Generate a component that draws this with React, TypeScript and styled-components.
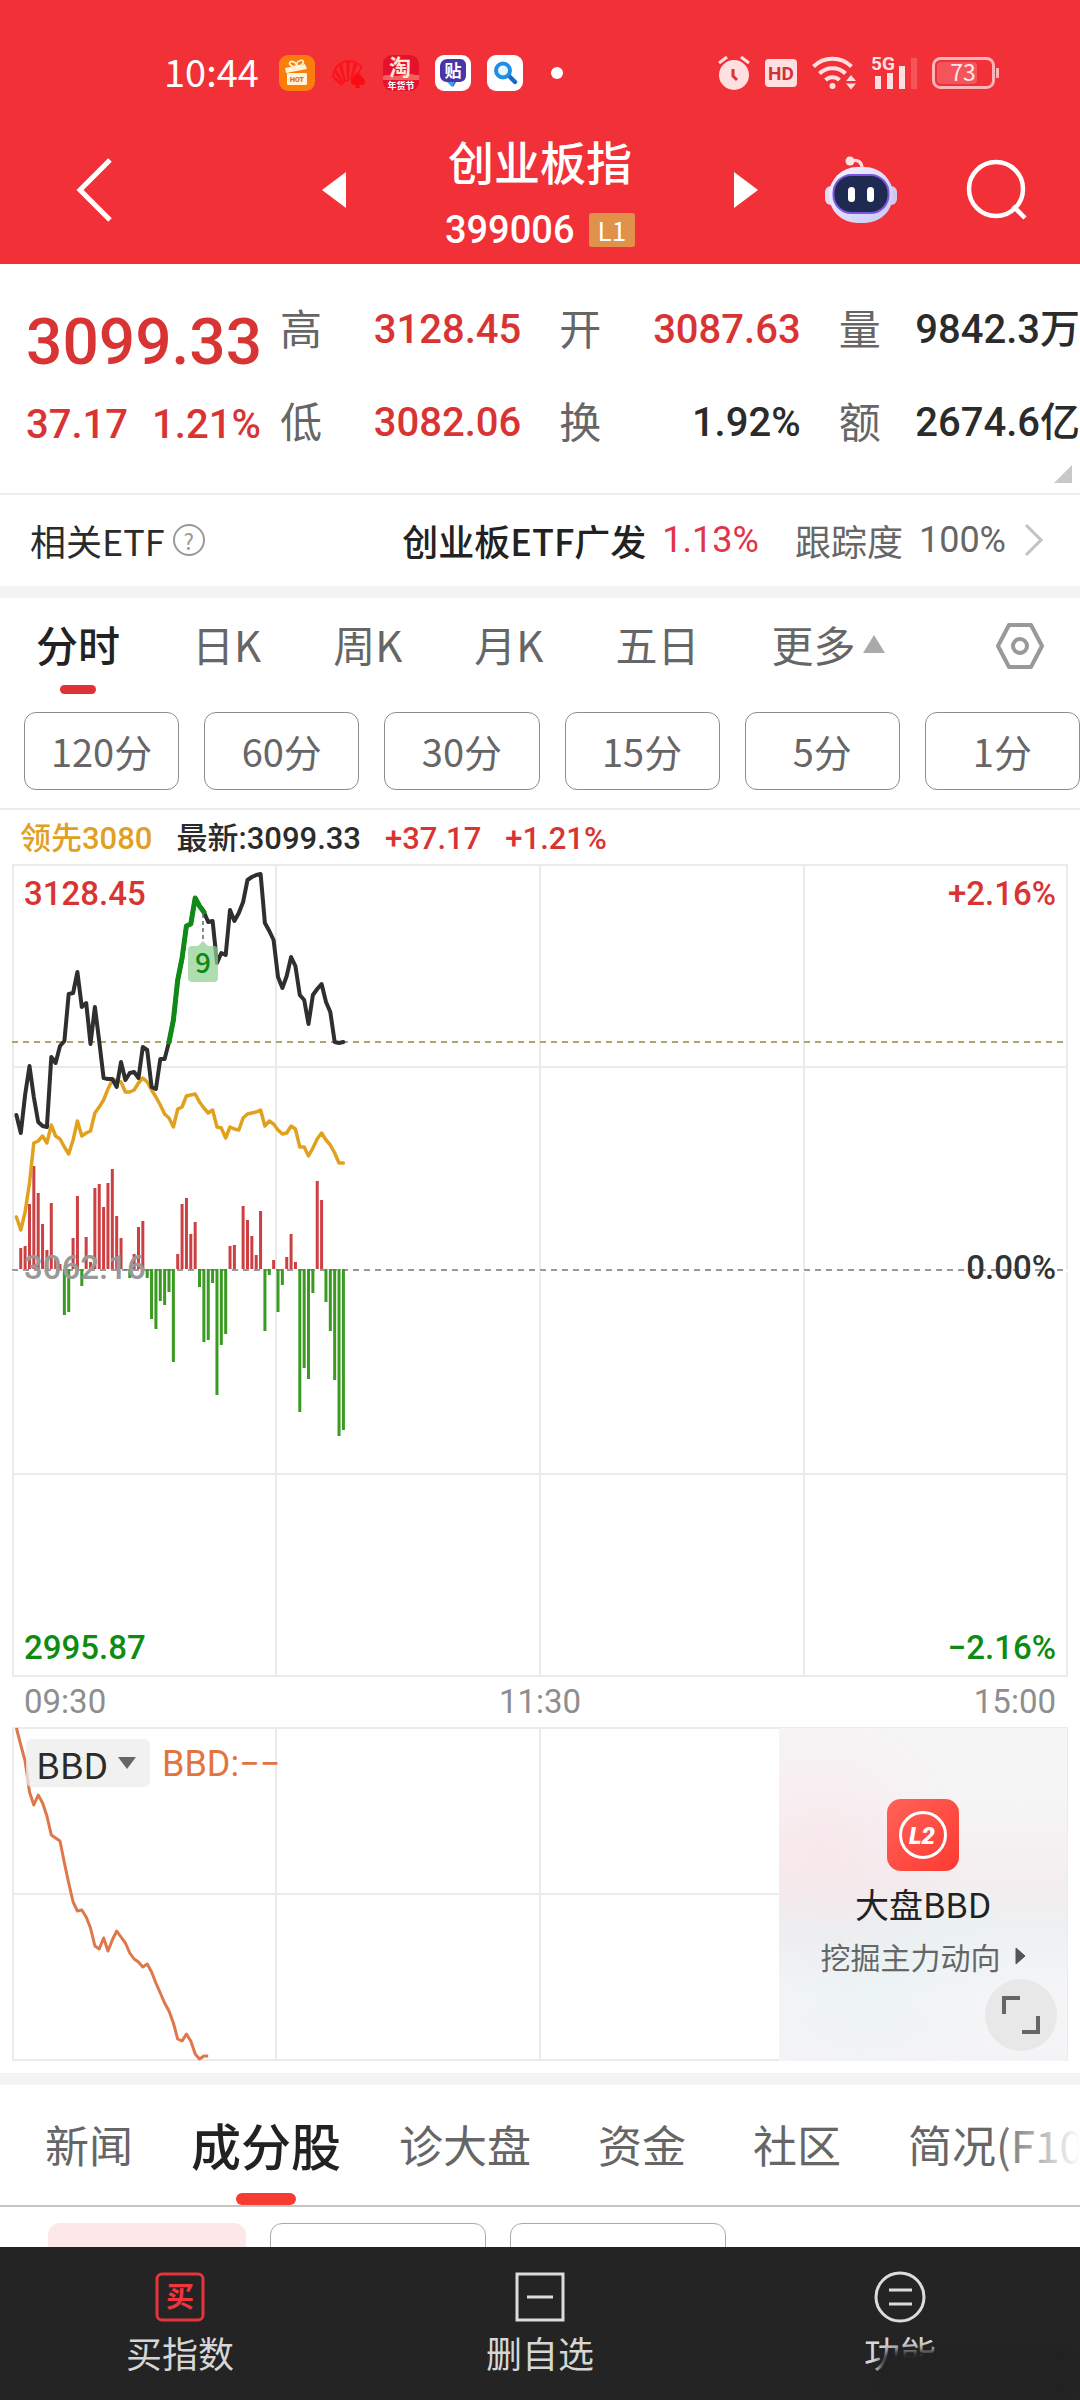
import React from "react";
import styled, { createGlobalStyle, css } from "styled-components";

const CJK = `"Noto Sans CJK SC", sans-serif`;
const NUM = `Roboto, "Noto Sans CJK SC", sans-serif`;
const RED = "#d93434";
const GREEN = "#0e8c12";

const GlobalStyle = createGlobalStyle`
  * { box-sizing: border-box; }
  body { margin: 0; background: #fff; color: #2b2b2b; font-family: ${CJK}; }
  button, select { font: inherit; color: inherit; background: none; border: 0; padding: 0; margin: 0; }
  h1, p, dl, dd, dt { margin: 0; font-weight: 400; }
  svg { display: block; flex: none; overflow: visible; }
`;

/* ---------- data ---------- */

const PRICE = [
  251, 269, 231, 202, 233, 258, 262, 263, 193, 199, 182, 177, 130, 129, 108, 143, 139, 180, 143, 177,
  214, 215, 215, 223, 198, 216, 209, 208, 214, 183, 186, 223, 225, 195, 195, 178, 156, 116, 94, 62,
  60, 34, 42, 48, 58, 57, 99, 89, 91, 46, 57, 49, 38, 16, 13, 11, 10, 59, 67, 76, 113, 124, 112, 93,
  102, 131, 136, 160, 131, 125, 120, 138, 148, 178, 179, 178,
];
const LEADING = [
  353, 366, 348, 319, 279, 277, 272, 279, 261, 272, 275, 283, 290, 276, 257, 272, 269, 267, 249, 243,
  236, 225, 216, 216, 218, 228, 228, 226, 219, 214, 218, 226, 233, 241, 250, 254, 263, 245, 243, 232,
  231, 230, 238, 244, 249, 246, 263, 264, 274, 263, 265, 266, 254, 250, 249, 248, 246, 262, 257, 260,
  266, 270, 269, 262, 265, 283, 283, 292, 284, 275, 269, 276, 281, 289, 299, 299,
];
const FLOW = [
  0, 21, 23, 65, 103, 76, 45, 19, 66, 10, 5, -46, -43, 31, 73, -17, 32, 7, 81, 85, 62, 86, 100, 53, 31,
  -1, -9, 15, 42, 48, -9, -50, -60, -32, -36, -23, -93, 15, 65, 71, 35, 47, -18, -73, -71, -14, -126,
  -76, -65, 23, 24, 0, 63, 49, 33, 14, 58, -62, -6, 9, -43, -16, 12, 35, 7, -143, -99, -110, -24, 88,
  69, -33, -62, -111, -167, -161,
];
const BBD = [
  1, 18, 34, 65, 78, 68, 76, 89, 108, 111, 114, 136, 156, 175, 184, 183, 190, 201, 219, 222, 211, 224,
  213, 204, 210, 216, 226, 232, 235, 240, 237, 245, 256, 266, 276, 284, 296, 312, 314, 307, 314, 327,
  332, 329, 329,
];

const xAt = (i: number) => 4.4 + i * 4.36;
const line = (ys: number[], from = 0) =>
  ys.map((y, i) => `${xAt(i + from).toFixed(1)},${y}`).join(" ");

const QUOTES = [
  { label: "高", value: "3128.45", up: true },
  { label: "开", value: "3087.63", up: true },
  { label: "量", value: "9842.3万" },
  { label: "低", value: "3082.06", up: true },
  { label: "换", value: "1.92%" },
  { label: "额", value: "2674.6亿" },
];

/* ---------- layout ---------- */

const Page = styled.div`
  display: flex;
  flex-direction: column;
  height: 100vh;
  overflow: hidden;
`;

const Content = styled.main`
  flex: 1;
  min-height: 0;
  overflow: hidden;
`;

const Header = styled.header`
  background: #f23037;
  color: #fff;
  flex: none;
`;

const StatusBar = styled.div`
  display: flex;
  align-items: center;
  justify-content: space-between;
  height: 110px;
  padding: 36px 80px 0 164px;
`;

const StatusGroup = styled.div<{ $gap: number }>`
  display: flex;
  align-items: center;
  gap: ${(p) => p.$gap}px;
`;

const Clock = styled.time`
  margin-right: 4px;
  padding-bottom: 4px;
  font: 400 38px/40px ${CJK};
`;

const TitleBar = styled.div`
  display: grid;
  grid-template-columns: 1fr auto 1fr;
  align-items: center;
  padding: 20px 52px 14px;
`;

const Stepper = styled.div`
  display: flex;
  align-items: center;
  justify-content: space-between;
  width: 436px;
`;

const TitleBlock = styled.div`
  text-align: center;
`;

const Title = styled.h1`
  font-size: 46px;
  font-weight: 500;
  line-height: 60px;
`;

const Code = styled.p`
  display: flex;
  align-items: center;
  justify-content: center;
  gap: 14px;
  margin-top: 20px;
  font: 500 38px/40px ${NUM};
`;

const Level = styled.span`
  padding: 0 9px;
  border-radius: 3px;
  background: #e2914a;
  font: 400 26px/34px ${CJK};
`;

const IconButton = styled.button`
  display: block;
`;

const BackButton = styled(IconButton)`
  justify-self: start;
  padding-left: 20px;
`;

const Actions = styled.div`
  display: flex;
  align-items: center;
  justify-content: flex-end;
  gap: 68px;
`;

const Quote = styled.section`
  position: relative;
  display: flex;
  padding: 19px 0 24px;
  border-bottom: 2px solid #efefef;
`;

const Headline = styled.div`
  width: 280px;
  padding: 20px 0 0 26px;
  color: ${RED};
  font-family: ${NUM};
`;

const LastPrice = styled.p`
  font-size: 64px;
  font-weight: 500;
  line-height: 80px;
`;

const Change = styled.p`
  display: flex;
  gap: 24px;
  font-size: 40px;
  font-weight: 500;
  line-height: 84px;
`;

const Stats = styled.dl`
  flex: 1;
  display: grid;
  grid-template-columns: repeat(3, 1fr);
  column-gap: 38px;
`;

const Stat = styled.div<{ $up?: boolean }>`
  display: flex;
  justify-content: space-between;
  height: 93px;
  white-space: nowrap;

  dt {
    font-size: 42px;
    line-height: 88px;
    color: #666;
  }

  dd {
    font-family: ${NUM};
    font-size: 40px;
    font-weight: 500;
    line-height: 94px;
    color: ${(p) => (p.$up ? RED : "#2b2b2b")};
  }
`;

const Corner = styled.span`
  position: absolute;
  right: 8px;
  bottom: 10px;
  border-left: 18px solid transparent;
  border-bottom: 18px solid #c8c8c8;
`;

const EtfRow = styled.section`
  display: flex;
  align-items: center;
  justify-content: space-between;
  height: 91px;
  padding: 0 36px 2px 30px;
  font-size: 36px;
  line-height: 52px;
`;

const EtfGroup = styled.div`
  display: flex;
  align-items: center;
  gap: 8px;
`;

const EtfLink = styled.a`
  display: flex;
  align-items: center;
  color: #666;
  text-decoration: none;

  strong {
    font-weight: 500;
    color: #222;
  }

  em {
    margin: 0 36px 0 16px;
    font-family: ${NUM};
    font-style: normal;
    color: #e0344a;
  }
`;

const Ratio = styled.span`
  margin: 0 18px 0 16px;
  font-family: ${NUM};
`;

const Help = styled.button`
  width: 32px;
  height: 32px;
  border: 2px solid #999;
  border-radius: 50%;
  color: #999;
  font-size: 22px;
  line-height: 26px;
`;

const Strip = styled.div`
  height: 12px;
  background: #f4f4f4;
`;

const PeriodTabs = styled.nav`
  display: flex;
  align-items: center;
  height: 96px;
  gap: 72px;
  padding: 0 36px;
`;

const Period = styled.button<{ $active?: boolean }>`
  position: relative;
  display: flex;
  align-items: center;
  gap: 8px;
  padding-bottom: 4px;
  font-size: 42px;
  line-height: 60px;
  color: #666;
  ${(p) =>
    p.$active &&
    css`
      color: #222;
      font-weight: 500;
      &::after {
        content: "";
        position: absolute;
        left: 50%;
        bottom: -16px;
        width: 36px;
        height: 9px;
        margin-left: -18px;
        border-radius: 5px;
        background: #e03236;
      }
    `}
`;

const Settings = styled(IconButton)`
  margin-left: auto;
`;

const Chips = styled.div`
  display: grid;
  grid-template-columns: repeat(6, 1fr);
  gap: 25px;
  padding: 18px 0 18px 24px;
  border-bottom: 2px solid #ececec;
`;

const Chip = styled.button`
  height: 78px;
  border: 1px solid #8c8c8c;
  border-radius: 12px;
  font-size: 38px;
  line-height: 56px;
  color: #666;
`;

const Legend = styled.div`
  display: flex;
  align-items: center;
  height: 54px;
  padding: 4px 20px 0;
  gap: 24px;
  font: 500 31px/48px ${NUM};
  color: #2b2b2b;
`;

const LegendItem = styled.span<{ $color?: string }>`
  color: ${(p) => p.$color ?? "inherit"};
`;

const Charts = styled.section`
  padding: 0 12px;
`;

const ChartBox = styled.div`
  position: relative;

  > svg { width: 100%; height: auto; }
`;

const ScaleOverlay = styled.div`
  position: absolute;
  inset: 0;
  display: flex;
  flex-direction: column;
  justify-content: space-between;
  padding: 10px 12px 9px;
  font: 500 33px/40px ${NUM};
`;

const ScaleRow = styled.div<{ $color: string }>`
  display: flex;
  justify-content: space-between;
  color: ${(p) => p.$color};
`;

const MidRow = styled(ScaleRow)`
  padding-bottom: 6px;
`;

const MidValue = styled.span`
  color: #333;
`;

const TimeAxis = styled.div`
  display: flex;
  justify-content: space-between;
  padding: 0 12px;
  font: 400 33px/50px ${NUM};
  color: #8e8e8e;
`;

const IndicatorBar = styled.div`
  position: absolute;
  left: 14px;
  top: 11px;
  display: flex;
  align-items: center;
  gap: 12px;
  font-size: 36px;
  line-height: 48px;
`;

const IndicatorPicker = styled.label`
  display: flex;
  align-items: center;
  height: 48px;
  padding: 0 14px 0 10px;
  gap: 9px;
  border-radius: 6px;
  background: rgba(236, 236, 236, 0.75);
  color: #2b2b2b;

  select { appearance: none; outline: 0; height: 48px; padding-bottom: 4px; }
`;

const IndicatorValue = styled.span`
  padding-top: 2px;
  font-family: ${NUM};
  color: #e2753f;
`;

const Promo = styled.aside`
  position: absolute;
  top: 1px;
  right: 1px;
  bottom: 0;
  width: 288px;
  display: flex;
  flex-direction: column;
  align-items: center;
  padding-top: 71px;
  background:
    radial-gradient(circle at 15% 36%, rgba(255, 218, 226, 0.4), transparent 45%),
    radial-gradient(circle at 30% 74%, rgba(224, 242, 244, 0.4), transparent 45%),
    linear-gradient(#f5f5f6 20%, #f4eeef 46%, #edf1f2 60%, #f4f5f7 80%, #f5f3f6);
`;

const PromoTitle = styled.p`
  margin-top: 9px;
  font-size: 34px;
  line-height: 48px;
  color: #222;
`;

const PromoLink = styled.a`
  display: flex;
  align-items: center;
  gap: 14px;
  margin-top: 6px;
  font-size: 30px;
  line-height: 44px;
  color: #666;
  text-decoration: none;
`;

const Expand = styled.button`
  position: absolute;
  right: 10px;
  bottom: 10px;
  display: grid;
  place-items: center;
  width: 72px;
  height: 72px;
  border-radius: 50%;
  background: #e8e8e8;
`;

const SectionStrip = styled(Strip)`
  margin-top: 12px;
`;

const SectionTabs = styled.nav`
  position: relative;
  display: flex;
  align-items: center;
  gap: 67px;
  height: 122px;
  padding: 0 0 0 45px;
  border-bottom: 2px solid #c4c4c4;
  overflow: hidden;

  &::after {
    content: "";
    position: absolute;
    inset: 0 0 0 auto;
    width: 84px;
    background: linear-gradient(90deg, rgba(255, 255, 255, 0), #fff);
  }
`;

const SectionTab = styled.button<{ $active?: boolean }>`
  position: relative;
  flex: none;
  height: 100%;
  padding-bottom: 2px;
  white-space: nowrap;
  font-size: 44px;
  color: #666;
  ${(p) =>
    p.$active &&
    css`
      margin: 0 -9px;
      font-size: 50px;
      font-weight: 500;
      color: #222;
      &::after {
        content: "";
        position: absolute;
        left: 50%;
        bottom: 0;
        width: 60px;
        height: 12px;
        margin-left: -30px;
        border-radius: 6px;
        background: #f53b32;
      }
    `}
`;

const Filters = styled.div`
  display: flex;
  gap: 24px;
  padding: 16px 48px;
`;

const Filter = styled.button<{ $active?: boolean }>`
  width: ${(p) => (p.$active ? 198 : 216)}px;
  height: 72px;
  border: 1px solid ${(p) => (p.$active ? "#fde8e9" : "#aaa")};
  border-radius: 12px;
  background: ${(p) => (p.$active ? "#fde8e9" : "#fff")};
`;

const BottomBar = styled.footer`
  position: relative;
  flex: none;
  display: grid;
  grid-template-columns: repeat(3, 1fr);
  height: 153px;
  background: #242424;
  color: #d6d6d6;
`;

const BottomAction = styled.button`
  display: flex;
  flex-direction: column;
  align-items: center;
  justify-content: flex-start;
  gap: 3px;
  padding-top: 24px;
  font-size: 36px;
  line-height: 52px;
`;

const Smudge = styled.span`
  position: absolute;
  right: 8px;
  bottom: 8px;
  width: 190px;
  height: 40px;
  border-radius: 12px;
  background: #222;
  box-shadow: 0 0 6px 2px #222;
  filter: blur(3px);
`;

/* ---------- drawings ---------- */

const GiftIcon = () => (
  <svg width="36" height="36" viewBox="0 0 36 36" aria-hidden="true">
    <rect width="36" height="36" rx="9" fill="#fb7d0b" />
    <g fill="none" stroke="#fff3d8" strokeWidth="1.6">
      <ellipse cx="14" cy="9" rx="3.6" ry="2.2" transform="rotate(25 14 9)" />
      <ellipse cx="21" cy="8" rx="3.6" ry="2.2" transform="rotate(-30 21 8)" />
    </g>
    <path d="M6 13 26 9l2 5-21 4z" fill="#fff3d8" />
    <rect x="8" y="18" width="20" height="12" rx="1" fill="#fff3d8" />
    <text x="18" y="26.5" textAnchor="middle" fontFamily="Roboto" fontWeight="900" fontSize="7" fill="#e06a10">HOT</text>
  </svg>
);

const FanIcon = () => (
  <svg width="36" height="36" viewBox="0 0 36 36" aria-hidden="true">
    <g fill="none" stroke="#fb141b" strokeWidth="1.8" strokeLinejoin="round">
      <path d="M12 28 2 22l1-6 9 11zM12 27 4 14l4-5 6 17zM14 26 10 8l6-2 1 19zM17 25 18 6l6 1-4 17zM20 24l6-16 5 4-5 7z" />
      <path d="M3 24c4 2 5 5 9 6" />
    </g>
    <path d="M27 17c3 5 7 6 7 10 0 3-4 4-6 2l1 4h-5l1-4c-2 2-5 1-5-2 0-4 5-5 7-10z" fill="#fb0c13" />
  </svg>
);

const TaoIcon = () => (
  <svg width="36" height="36" viewBox="0 0 36 36" aria-hidden="true">
    <rect width="36" height="36" rx="9" fill="#e5112d" />
    <path d="M0 21c7-3 11 2 18-1s12 0 18 0v5H0z" fill="#f4776c" opacity=".8" />
    <text x="17" y="20" textAnchor="middle" fontFamily="Noto Sans CJK SC" fontWeight="700" fontSize="22" fill="#ffe7d6">淘</text>
    <text x="18" y="34" textAnchor="middle" fontFamily="Noto Sans CJK SC" fontWeight="700" fontSize="9" fill="#fff">年货节</text>
  </svg>
);

const TieIcon = () => (
  <svg width="36" height="36" viewBox="0 0 36 36" aria-hidden="true">
    <rect width="36" height="36" rx="9" fill="#fff" />
    <path d="M13 4h12c4 0 6 3 6 6v10c0 5-3 7-7 7h-3l-3 5-3-5h-3c-4 0-7-3-7-7V12c0-5 3-8 8-8z" fill="#4a35a8" />
    <path d="M12 27h8l-3 5z" fill="#3aa0ea" />
    <text x="18" y="22" textAnchor="middle" fontFamily="Noto Sans CJK SC" fontWeight="700" fontSize="17" fill="#fff">贴</text>
  </svg>
);

const FindIcon = () => (
  <svg width="36" height="36" viewBox="0 0 36 36" aria-hidden="true">
    <rect width="36" height="36" rx="9" fill="#fff" />
    <path d="M22 21l6 6" stroke="#1668c4" strokeWidth="4.4" strokeLinecap="round" />
    <circle cx="16" cy="15.5" r="7" fill="#eaf6ff" stroke="#1d8fe6" strokeWidth="4" />
  </svg>
);

const AlarmIcon = () => (
  <svg width="32" height="36" viewBox="0 0 32 36" aria-hidden="true">
    <circle cx="16" cy="20" r="15" fill="#ffdfe0" />
    <path d="M1 8l8-6M31 8l-8-6" stroke="#ffdfe0" strokeWidth="3" />
    <path d="M15 14v7l4 4" fill="none" stroke="#d9333a" strokeWidth="3" />
  </svg>
);

const HdIcon = () => (
  <svg width="32" height="28" viewBox="0 0 32 28" aria-hidden="true">
    <rect width="32" height="28" rx="4" fill="#ffdfe0" />
    <text x="16" y="21" textAnchor="middle" fontFamily="Roboto" fontWeight="700" fontSize="19" fill="#d0323a">HD</text>
  </svg>
);

const WifiIcon = () => (
  <svg width="44" height="36" viewBox="0 0 44 36" aria-hidden="true">
    <g fill="none" stroke="#ffdfe0" strokeWidth="4">
      <path d="M1.5 11.5a27 27 0 0 1 38 0" />
      <path d="M7.5 18.5a18.5 18.5 0 0 1 26 0" />
      <path d="M13.5 25a10 10 0 0 1 14 0" />
    </g>
    <circle cx="20.5" cy="31" r="3" fill="#ffdfe0" />
    <path d="M34 26l5-6 5 6zM34 28.5h10l-5 6z" fill="#ffdfe0" />
  </svg>
);

const SignalIcon = () => (
  <svg width="46" height="34" viewBox="0 0 46 34" aria-hidden="true">
    <text x="0" y="14" fontFamily="Roboto" fontWeight="700" fontSize="19" fill="#ffdfe0">5G</text>
    <rect x="4" y="20" width="6" height="13" fill="#ffdfe0" />
    <rect x="16" y="17" width="6" height="16" fill="#ffdfe0" />
    <rect x="28" y="10" width="6" height="23" fill="#ffdfe0" />
    <rect x="40" y="2" width="6" height="31" fill="#f7545a" />
  </svg>
);

const BatteryIcon = () => (
  <svg width="68" height="32" viewBox="0 0 68 32" aria-hidden="true">
    <rect x="1.5" y="1.5" width="60" height="29" rx="7" fill="none" stroke="#fbb4b7" strokeWidth="3" />
    <rect x="5" y="5" width="40" height="22" rx="4" fill="#f4555b" />
    <path d="M65.5 11v10" stroke="#fbb4b7" strokeWidth="3" />
    <text x="31" y="24" textAnchor="middle" fontFamily="Noto Sans CJK SC" fontSize="23" fill="#ffe6e7">73</text>
  </svg>
);

const RobotIcon = () => (
  <svg width="74" height="68" viewBox="0 0 74 68" aria-hidden="true">
    <defs>
      <linearGradient id="shell" x1="0" y1="0" x2="1" y2="1">
        <stop offset="0" stopColor="#fbf3ff" />
        <stop offset="1" stopColor="#c6c8f5" />
      </linearGradient>
    </defs>
    <path d="M27 5c7-2 11 1 11 8" fill="none" stroke="#ffd9dd" strokeWidth="3.4" />
    <circle cx="26" cy="5" r="4.5" fill="#ffe4e6" />
    <rect x="1" y="30" width="12" height="19" rx="6" fill="#e4daf6" />
    <rect x="61" y="30" width="12" height="19" rx="6" fill="#cfc8f4" />
    <rect x="5" y="11" width="64" height="56" rx="28" fill="url(#shell)" />
    <rect x="9.5" y="19" width="55" height="38" rx="18" fill="#1f2a50" stroke="#7a55e0" strokeWidth="2" />
    <rect x="24" y="31" width="7" height="15" rx="3.5" fill="#fff" />
    <rect x="43" y="31" width="7" height="15" rx="3.5" fill="#fff" />
  </svg>
);

const Grid = ({ height, rows }: { height: number; rows: number }) => (
  <g fill="none" stroke="#ebebeb" strokeWidth="2">
    <rect x="1" y="1" width="1054" height={height - 2} />
    {[264, 528, 792].map((x) => (
      <path key={x} d={`M${x} 0V${height}`} />
    ))}
    {Array.from({ length: rows - 1 }, (_, i) => Math.round((height * (i + 1)) / rows)).map((y) => (
      <path key={y} d={`M0 ${y}H1056`} />
    ))}
  </g>
);

const PriceChart = () => (
  <svg viewBox="0 0 1056 813" role="img" aria-label="分时走势">
    <Grid height={813} rows={4} />
    <path d="M0 407H1056" stroke="#fff" strokeWidth="3" />
    <path d="M0 406H1056" stroke="#999" strokeWidth="2" strokeDasharray="6 5" />
    <path d="M0 178H1056" stroke="#b3a26a" strokeWidth="2" strokeDasharray="6 5" />
    {FLOW.map((v, i) =>
      v === 0 ? null : (
        <rect
          key={i}
          x={xAt(i) - 1.5}
          y={v > 0 ? 405 - v : 405}
          width="3"
          height={Math.abs(v)}
          fill={v > 0 ? "#cc3f42" : "#3a9a22"}
        />
      )
    )}
    <g fill="none" strokeLinejoin="round" strokeLinecap="round">
      <polyline points={line(LEADING)} stroke="#e0a11f" strokeWidth="3.5" />
      <polyline points={line(PRICE)} stroke="#2f2f2f" strokeWidth="4" />
      <polyline points={line(PRICE.slice(35, 44), 35)} stroke="#0f8a14" strokeWidth="5" />
    </g>
    <path d="M191 50v28" stroke="#666" strokeWidth="1.5" strokeDasharray="4 3" />
    <path d="M180 82h6l5-5 5 5h6q4 0 4 4v28q0 4-4 4h-22q-4 0-4-4V86q0-4 4-4z" fill="#8fd092" fillOpacity=".72" />
    <text x="191" y="109" textAnchor="middle" fontFamily="Noto Sans CJK SC" fontWeight="500" fontSize="28" fill="#0b8a10">9</text>
  </svg>
);

const BbdChart = () => (
  <svg viewBox="0 0 1056 334" role="img" aria-label="BBD">
    <Grid height={334} rows={2} />
    <polyline points={line(BBD)} fill="none" stroke="#e0774a" strokeWidth="3" strokeLinejoin="round" />
  </svg>
);

/* ---------- page ---------- */

export default function App() {
  return (
    <Page>
      <GlobalStyle />
      <Header>
        <StatusBar>
          <StatusGroup $gap={16}>
            <Clock>10:44</Clock>
            <GiftIcon />
            <FanIcon />
            <TaoIcon />
            <TieIcon />
            <FindIcon />
            <svg width="36" height="36" viewBox="0 0 36 36" aria-hidden="true">
              <circle cx="18" cy="18" r="6" fill="#fff" />
            </svg>
          </StatusGroup>
          <StatusGroup $gap={15}>
            <AlarmIcon />
            <HdIcon />
            <WifiIcon />
            <SignalIcon />
            <BatteryIcon />
          </StatusGroup>
        </StatusBar>
        <TitleBar>
          <BackButton aria-label="返回">
            <svg width="44" height="66" viewBox="0 0 44 66">
              <path d="M38 3 8 33l30 30" fill="none" stroke="#fff" strokeWidth="5" />
            </svg>
          </BackButton>
          <Stepper>
            <IconButton aria-label="上一只">
              <svg width="24" height="36" viewBox="0 0 24 36">
                <path d="M24 0v36L0 18z" fill="#fff" />
              </svg>
            </IconButton>
            <TitleBlock>
              <Title>创业板指</Title>
              <Code>
                399006 <Level>L1</Level>
              </Code>
            </TitleBlock>
            <IconButton aria-label="下一只">
              <svg width="24" height="36" viewBox="0 0 24 36">
                <path d="M0 0v36l24-18z" fill="#fff" />
              </svg>
            </IconButton>
          </Stepper>
          <Actions>
            <IconButton aria-label="智能助手">
              <RobotIcon />
            </IconButton>
            <IconButton aria-label="搜索">
              <svg width="62" height="62" viewBox="0 0 62 62">
                <g fill="none" stroke="#fff" strokeWidth="4.5">
                  <circle cx="30" cy="30" r="27" />
                  <path d="M47 47l12 12" />
                </g>
              </svg>
            </IconButton>
          </Actions>
        </TitleBar>
      </Header>

      <Content>
        <Quote>
          <Headline>
            <LastPrice>3099.33</LastPrice>
            <Change>
              <span>37.17</span>
              <span>1.21%</span>
            </Change>
          </Headline>
          <Stats>
            {QUOTES.map((q) => (
              <Stat key={q.label} $up={q.up}>
                <dt>{q.label}</dt>
                <dd>{q.value}</dd>
              </Stat>
            ))}
          </Stats>
          <Corner />
        </Quote>

        <EtfRow>
          <EtfGroup>
            相关ETF
            <Help aria-label="说明">?</Help>
          </EtfGroup>
          <EtfLink href="#etf">
            <strong>创业板ETF广发</strong>
            <em>1.13%</em>
            <span>跟踪度</span>
            <Ratio>100%</Ratio>
            <svg width="20" height="34" viewBox="0 0 20 34" aria-hidden="true">
              <path d="M2 2l15 15L2 32" fill="none" stroke="#c2c2c2" strokeWidth="3" />
            </svg>
          </EtfLink>
        </EtfRow>
        <Strip />

        <PeriodTabs>
          <Period $active>分时</Period>
          <Period>日K</Period>
          <Period>周K</Period>
          <Period>月K</Period>
          <Period>五日</Period>
          <Period>
            更多
            <svg width="22" height="18" viewBox="0 0 22 18" aria-hidden="true">
              <path d="M11 0l11 18H0z" fill="#aaa" />
            </svg>
          </Period>
          <Settings aria-label="设置">
            <svg width="48" height="46" viewBox="0 0 48 46">
              <g fill="none" stroke="#999" strokeWidth="4" strokeLinejoin="round">
                <path d="M13 2h22l11 21-11 21H13L2 23z" />
                <circle cx="24" cy="23" r="7" />
              </g>
            </svg>
          </Settings>
        </PeriodTabs>
        <Chips>
          {["120分", "60分", "30分", "15分", "5分", "1分"].map((t) => (
            <Chip key={t}>{t}</Chip>
          ))}
        </Chips>

        <Legend>
          <LegendItem $color="#dfa024">领先3080</LegendItem>
          <LegendItem>最新:3099.33</LegendItem>
          <LegendItem $color={RED}>+37.17</LegendItem>
          <LegendItem $color={RED}>+1.21%</LegendItem>
        </Legend>

        <Charts>
          <ChartBox>
            <PriceChart />
            <ScaleOverlay>
              <ScaleRow $color={RED}>
                <span>3128.45</span>
                <span>+2.16%</span>
              </ScaleRow>
              <MidRow $color="#999">
                <span>3062.16</span>
                <MidValue>0.00%</MidValue>
              </MidRow>
              <ScaleRow $color={GREEN}>
                <span>2995.87</span>
                <span>−2.16%</span>
              </ScaleRow>
            </ScaleOverlay>
          </ChartBox>
          <TimeAxis>
            <span>09:30</span>
            <span>11:30</span>
            <span>15:00</span>
          </TimeAxis>
          <ChartBox>
            <BbdChart />
            <IndicatorBar>
              <IndicatorPicker>
                <select aria-label="指标" defaultValue="BBD">
                  <option>BBD</option>
                </select>
                <svg width="18" height="12" viewBox="0 0 18 12" aria-hidden="true">
                  <path d="M0 0h18L9 12z" fill="#666" />
                </svg>
              </IndicatorPicker>
              <IndicatorValue>BBD:−−</IndicatorValue>
            </IndicatorBar>
            <Promo>
              <svg width="72" height="72" viewBox="0 0 72 72" aria-hidden="true">
                <defs>
                  <linearGradient id="l2" x1="0" y1="0" x2="1" y2="1">
                    <stop offset="0" stopColor="#ff6258" />
                    <stop offset="1" stopColor="#fd3a32" />
                  </linearGradient>
                </defs>
                <rect width="72" height="72" rx="14" fill="url(#l2)" />
                <circle cx="36" cy="36" r="22.5" fill="none" stroke="#fff" strokeWidth="3" />
                <text x="35" y="45" textAnchor="middle" fontFamily="Roboto" fontWeight="900" fontStyle="italic" fontSize="24" fill="#fff">L2</text>
              </svg>
              <PromoTitle>大盘BBD</PromoTitle>
              <PromoLink href="#bbd">
                挖掘主力动向
                <svg width="11" height="18" viewBox="0 0 11 18" aria-hidden="true">
                  <path d="M1 1l9 8-9 8z" fill="#555" stroke="#555" strokeLinejoin="round" />
                </svg>
              </PromoLink>
              <Expand aria-label="全屏">
                <svg width="38" height="38" viewBox="0 0 38 38">
                  <path d="M2 18V2h16M36 20v16H20" fill="none" stroke="#666" strokeWidth="4" />
                </svg>
              </Expand>
            </Promo>
          </ChartBox>
        </Charts>
        <SectionStrip />

        <SectionTabs>
          <SectionTab>新闻</SectionTab>
          <SectionTab $active>成分股</SectionTab>
          <SectionTab>诊大盘</SectionTab>
          <SectionTab>资金</SectionTab>
          <SectionTab>社区</SectionTab>
          <SectionTab>简况(F10)</SectionTab>
        </SectionTabs>
        <Filters>
          <Filter $active />
          <Filter />
          <Filter />
        </Filters>
      </Content>

      <BottomBar>
        <BottomAction>
          <svg width="52" height="52" viewBox="0 0 52 52" aria-hidden="true">
            <rect x="3" y="3" width="46" height="46" rx="5" fill="none" stroke="#e5343c" strokeWidth="3" />
            <text x="26" y="36" textAnchor="middle" fontFamily="Noto Sans CJK SC" fontWeight="700" fontSize="28" fill="#f03440">买</text>
          </svg>
          买指数
        </BottomAction>
        <BottomAction>
          <svg width="52" height="52" viewBox="0 0 52 52" aria-hidden="true">
            <g fill="none" stroke="#dcdcdc" strokeWidth="3">
              <rect x="3" y="3" width="46" height="46" />
              <path d="M13 26h26" />
            </g>
          </svg>
          删自选
        </BottomAction>
        <BottomAction>
          <svg width="52" height="52" viewBox="0 0 52 52" aria-hidden="true">
            <g fill="none" stroke="#dcdcdc" strokeWidth="3">
              <circle cx="26" cy="26" r="24" />
              <path d="M15 19h23M15 33h23" />
            </g>
          </svg>
          功能
        </BottomAction>
        <Smudge />
      </BottomBar>
    </Page>
  );
}
